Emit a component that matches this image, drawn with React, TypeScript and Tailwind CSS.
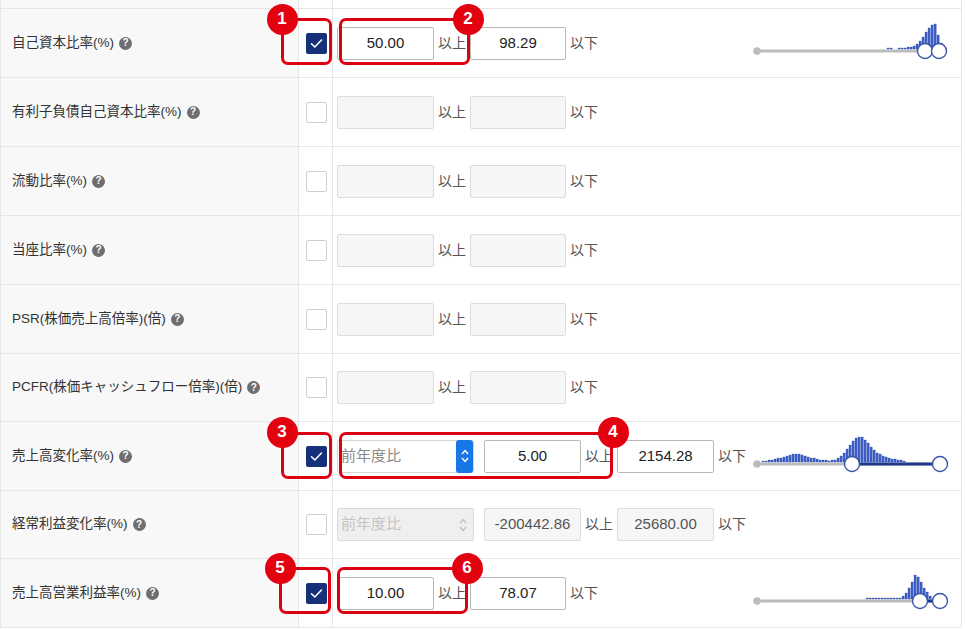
import React from "react";

type Bar = { x: number; h: number };

const FONT = { fontFamily: '"Liberation Sans", "Noto Sans CJK JP", sans-serif' };

function HelpIcon() {
  return (
    <span className="ml-[5px] inline-flex h-[13px] w-[13px] shrink-0 items-center justify-center rounded-full bg-[#6e6e6e] text-[10px] font-bold leading-none text-white">
      ?
    </span>
  );
}

function CheckBox({ checked }: { checked: boolean }) {
  if (checked) {
    return (
      <div className="flex h-[21px] w-[21px] items-center justify-center rounded-[2px] bg-[#16307a]">
        <svg width="13" height="11" viewBox="0 0 13 11">
          <path d="M1.5 5.8 L4.8 9 L11.5 2" fill="none" stroke="#ffffff" strokeWidth="1.6" strokeLinecap="round" strokeLinejoin="round" />
        </svg>
      </div>
    );
  }
  return <div className="h-[21px] w-[21px] rounded-[2px] border border-[#cfcfcf] bg-white" />;
}

function NumInput({ value, active, w = 96 }: { value?: string; active: boolean; w?: number }) {
  return (
    <div
      className={
        "flex h-[33px] shrink-0 items-center justify-center whitespace-nowrap rounded-[2px] border text-[15px] " +
        (active ? "border-[#b9b9b9] bg-white text-[#222]" : "border-[#dcdcdc] bg-[#f6f6f6] text-[#555]")
      }
      style={{ width: w }}
    >
      {value}
    </div>
  );
}

function Unit({ t }: { t: string }) {
  return <span className="mx-[4px] shrink-0 whitespace-nowrap text-[14px] text-[#555]">{t}</span>;
}

function Select({ disabled }: { disabled: boolean }) {
  return (
    <div
      className={
        "flex h-[33px] w-[137px] shrink-0 items-center justify-between whitespace-nowrap rounded-[2px] border pl-[3px] text-[15px] " +
        (disabled ? "border-[#dcdcdc] bg-[#efefef] text-[#c4c4c4]" : "border-[#d6d6d6] bg-white text-[#8a8a8a]")
      }
    >
      <span>前年度比</span>
      {disabled ? (
        <div className="mr-[2px] flex h-[29px] w-[17px] items-center justify-center">
          <svg width="10" height="18" viewBox="0 0 10 18">
            <path d="M2 7 L5 3.5 L8 7 M2 11 L5 14.5 L8 11" fill="none" stroke="#c0c0c0" strokeWidth="1.3" />
          </svg>
        </div>
      ) : (
        <div className="flex h-[33px] w-[17px] items-center justify-center rounded-[3px] bg-[#1877e6]">
          <svg width="10" height="18" viewBox="0 0 10 18">
            <path d="M2 7 L5 3.5 L8 7 M2 11 L5 14.5 L8 11" fill="none" stroke="#ffffff" strokeWidth="1.4" />
          </svg>
        </div>
      )}
    </div>
  );
}

function Histogram({ bars, lo, hi }: { bars: Bar[]; lo: number; hi: number }) {
  const ox = 752;
  const ty = 33;
  return (
    <svg width="200" height="50" viewBox="0 0 200 50" className="ml-auto mr-[9px] shrink-0">
      <line x1={757 - ox} y1={ty} x2={hi - ox} y2={ty} stroke="#bcbcbc" strokeWidth="3" />
      <line x1={lo - ox} y1={ty} x2={hi - ox} y2={ty} stroke="#1b3a8c" strokeWidth="3" />
      <circle cx={757 - ox} cy={ty} r="3.8" fill="#bcbcbc" />
      {bars.map((b, i) => (
        <rect
          key={i}
          x={b.x - ox}
          y={ty - 2 - b.h}
          width="2.2"
          height={b.h}
          fill="#3e5fc6"
          stroke="#2a48a8"
          strokeWidth="0.3"
        />
      ))}
      <circle cx={lo - ox} cy={ty} r="7.5" fill="#ffffff" stroke="#3a55a8" strokeWidth="1.4" />
      <circle cx={hi - ox} cy={ty} r="7.5" fill="#ffffff" stroke="#3a55a8" strokeWidth="1.4" />
    </svg>
  );
}

function mk(start: number, heights: number[], step = 3): Bar[] {
  return heights.map((h, i) => ({ x: start + i * step, h })).filter((b) => b.h > 0);
}

const bars1: Bar[] = [
  ...mk(887, [1, 1]),
  ...mk(898, [1, 1, 1, 2, 2]),
  ...mk(913, [3, 5, 8, 12, 17, 21, 24, 25, 14, 6]),
];

const bars7: Bar[] = (() => {
  const out: Bar[] = [];
  for (let x = 762; x <= 905; x += 3) {
    const bump = 7 * Math.exp(-Math.pow((x - 795) / 18, 2));
    const peak = 24 * Math.exp(-Math.pow((x - 858) / 14, 2));
    const tail = x > 860 ? 4 * Math.exp(-Math.pow((x - 880) / 14, 2)) : 0;
    const h = Math.max(1, Math.round(bump + peak + tail + 1));
    out.push({ x, h });
  }
  return out;
})();

const bars9: Bar[] = [
  ...mk(866, [1, 1, 1, 1, 1, 1, 1, 1, 1, 1, 1, 1]),
  ...mk(902, [3, 6, 11, 17, 24, 22, 17, 11, 7, 3]),
];

type Row = {
  label: string;
  h: number;
  kind: "plain" | "select";
  checked: boolean;
  v1?: string;
  v2?: string;
  disabled?: boolean;
  hist?: React.ReactNode;
};

const rows: Row[] = [
  { label: "自己資本比率(%)", h: 69, kind: "plain", checked: true, v1: "50.00", v2: "98.29", hist: <Histogram bars={bars1} lo={925} hi={939} /> },
  { label: "有利子負債自己資本比率(%)", h: 69, kind: "plain", checked: false },
  { label: "流動比率(%)", h: 69, kind: "plain", checked: false },
  { label: "当座比率(%)", h: 69, kind: "plain", checked: false },
  { label: "PSR(株価売上高倍率)(倍)", h: 69, kind: "plain", checked: false },
  { label: "PCFR(株価キャッシュフロー倍率)(倍)", h: 68, kind: "plain", checked: false },
  { label: "売上高変化率(%)", h: 69, kind: "select", checked: true, v1: "5.00", v2: "2154.28", hist: <Histogram bars={bars7} lo={852} hi={940} /> },
  { label: "経常利益変化率(%)", h: 68, kind: "select", checked: false, disabled: true, v1: "-200442.86", v2: "25680.00" },
  { label: "売上高営業利益率(%)", h: 69, kind: "plain", checked: true, v1: "10.00", v2: "78.07", hist: <Histogram bars={bars9} lo={920} hi={940} /> },
];

function Marker({ n, x, y }: { n: number; x: number; y: number }) {
  return (
    <div
      className="absolute flex h-[31px] w-[31px] items-center justify-center rounded-full bg-[#e3000f] text-[17px] font-bold text-white"
      style={{ left: x - 15.5, top: y - 15.5 }}
    >
      {n}
    </div>
  );
}

function Box({ x, y, w, h }: { x: number; y: number; w: number; h: number }) {
  return (
    <div
      className="absolute rounded-[7px] border-[3px] border-[#dc0010]"
      style={{ left: x, top: y, width: w, height: h }}
    />
  );
}

export default function App() {
  return (
    <div className="relative h-[629px] w-[965px] overflow-hidden bg-white text-[#333]" style={FONT}>
      <div className="w-[962px] border-x border-[#e6e6e6]">
        <div className="flex h-[9px] border-b border-[#e6e6e6]">
          <div className="w-[298px] border-r border-[#e6e6e6] bg-[#f8f8f8]" />
          <div className="w-[34px] border-r border-[#e6e6e6]" />
          <div className="flex-1" />
        </div>
        {rows.map((r, i) => (
          <div key={i} className="flex border-b border-[#e6e6e6]" style={{ height: r.h }}>
            <div className="flex w-[298px] shrink-0 items-center whitespace-nowrap border-r border-[#e6e6e6] bg-[#f8f8f8] pl-[11px] text-[13.5px] text-[#333]">
              <span>{r.label}</span>
              <HelpIcon />
            </div>
            <div className="flex w-[34px] shrink-0 items-center justify-center border-r border-[#e6e6e6] pl-[1px]">
              <CheckBox checked={r.checked} />
            </div>
            <div className="flex min-w-0 flex-1 items-center pl-[4px]">
              {r.kind === "plain" ? (
                <>
                  <NumInput value={r.v1} active={r.checked} w={97} />
                  <Unit t="以上" />
                  <NumInput value={r.v2} active={r.checked} w={96} />
                  <Unit t="以下" />
                </>
              ) : (
                <>
                  <Select disabled={!!r.disabled} />
                  <div className="ml-[10px] shrink-0">
                    <NumInput value={r.v1} active={r.checked} w={97} />
                  </div>
                  <Unit t="以上" />
                  <NumInput value={r.v2} active={r.checked} w={97} />
                  <Unit t="以下" />
                </>
              )}
              {r.hist}
            </div>
          </div>
        ))}
      </div>

      <Box x={281} y={18} w={51} h={47} />
      <Box x={339} y={18} w={131} h={47} />
      <Box x={281} y={432} w={51} h={47} />
      <Box x={339} y={432} w={274} h={47} />
      <Box x={279} y={567} w={52} h={47} />
      <Box x={337} y={567} w={131} h={47} />

      <Marker n={1} x={282} y={19} />
      <Marker n={2} x={468} y={19} />
      <Marker n={3} x={282} y={432} />
      <Marker n={4} x={613} y={432} />
      <Marker n={5} x={280} y={568} />
      <Marker n={6} x={467} y={568} />
    </div>
  );
}
